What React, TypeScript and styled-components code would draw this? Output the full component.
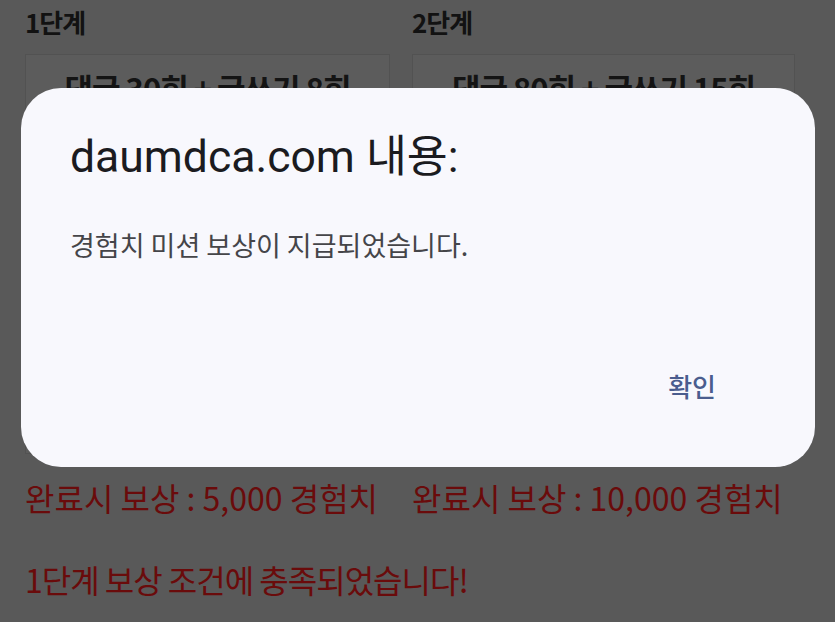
import styled, { createGlobalStyle } from "styled-components";

const GlobalStyle = createGlobalStyle`
  html, body {
    margin: 0;
    padding: 0;
    background: #595959;
  }
  body {
    font-family: "Noto Sans CJK KR", "Noto Sans", sans-serif;
    height: 622px;
    overflow: hidden;
  }
`;

interface Stage {
  title: string;
  mission: string;
  reward: string;
}

const stages: Stage[] = [
  { title: "1단계", mission: "댓글 30회 + 글쓰기 8회", reward: "완료시 보상 : 5,000 경험치" },
  { title: "2단계", mission: "댓글 80회 + 글쓰기 15회", reward: "완료시 보상 : 10,000 경험치" },
];

const App: React.FC = () => {
  return (
    <>
      <GlobalStyle />
      <Page>
        <Stages>
          {stages.map((s) => (
            <StageColumn key={s.title}>
              <StageTitle>{s.title}</StageTitle>
              <MissionBox>
                <MissionText>{s.mission}</MissionText>
              </MissionBox>
              <Reward>{s.reward}</Reward>
            </StageColumn>
          ))}
        </Stages>
        <Notice>1단계 보상 조건에 충족되었습니다!</Notice>
      </Page>

      <Dialog role="alertdialog">
        <DialogTitle>daumdca.com 내용:</DialogTitle>
        <DialogMessage>경험치 미션 보상이 지급되었습니다.</DialogMessage>
        <DialogFooter>
          <ConfirmButton>확인</ConfirmButton>
        </DialogFooter>
      </Dialog>
    </>
  );
};

export default App;

const Page = styled.div`
  display: flex;
  flex-direction: column;
  padding: 7px 25px 0;
`;

const Stages = styled.div`
  display: grid;
  grid-template-columns: 365px 383px;
  column-gap: 22px;
`;

const StageColumn = styled.div`
  display: flex;
  flex-direction: column;
  min-width: 0;
`;

const StageTitle = styled.div`
  font-size: 26px;
  line-height: 30px;
  font-weight: 700;
  color: #121212;
  letter-spacing: -1px;
`;

const MissionBox = styled.div`
  margin-top: 17px;
  height: 400px;
  box-sizing: border-box;
  padding: 13px 0 0;
  background: #5c5c5c;
  border: 1px solid #525252;
`;

const MissionText = styled.div`
  font-size: 31px;
  line-height: 40px;
  font-weight: 700;
  color: #141414;
  white-space: nowrap;
  text-align: center;
  letter-spacing: -1px;
`;

const Reward = styled.div`
  margin-top: 24px;
  font-size: 32px;
  line-height: 38px;
  color: #6a0b0b;
  white-space: nowrap;
`;

const Notice = styled.div`
  margin-top: 44px;
  font-size: 32px;
  line-height: 38px;
  color: #6a0b0b;
  letter-spacing: -1px;
`;

const Dialog = styled.div`
  position: fixed;
  top: 88px;
  left: 21px;
  width: 794px;
  height: 379px;
  box-sizing: border-box;
  display: flex;
  flex-direction: column;
  padding: 43px 0 0 49px;
  background: #f8f8fd;
  border-radius: 40px;
`;

const DialogTitle = styled.div`
  font-family: "Roboto", "Noto Sans CJK KR", sans-serif;
  font-size: 44.5px;
  line-height: 52px;
  color: #1b1b1f;
`;

const DialogMessage = styled.div`
  margin-top: 44px;
  font-size: 27px;
  line-height: 36px;
  color: #454549;
`;

const DialogFooter = styled.div`
  margin-top: auto;
  display: flex;
  justify-content: flex-end;
  padding: 0 87px 58px 0;
`;

const ConfirmButton = styled.button`
  border: none;
  background: transparent;
  padding: 0 12px;
  height: 48px;
  font-family: "Noto Sans CJK KR", sans-serif;
  font-size: 26px;
  font-weight: 500;
  color: #4a5d8e;
  cursor: pointer;
`;
